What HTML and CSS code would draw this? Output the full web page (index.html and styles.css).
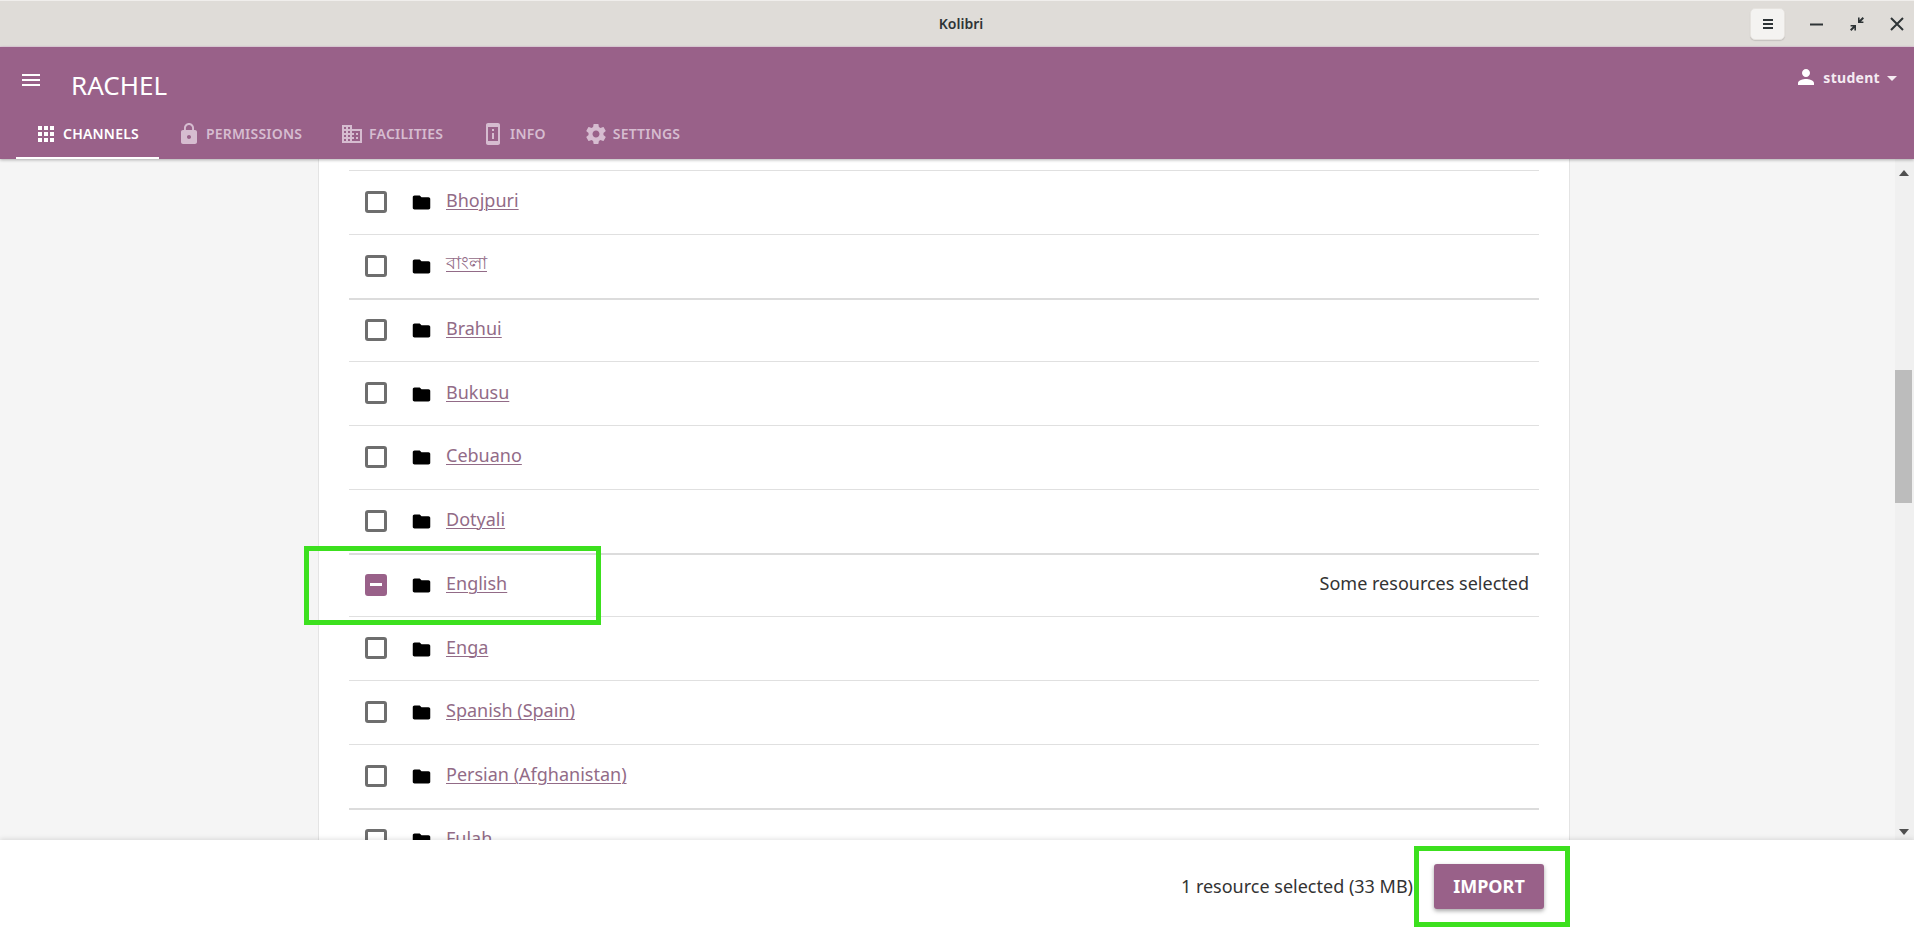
FILE: index.html
```html
<!DOCTYPE html>
<html lang="en">
<head>
  <meta charset="UTF-8">
  <title>Kolibri</title>
  <link rel="stylesheet" href="styles.css">
</head>
<body>

<div class="titlebar">
  <div class="win-title">Kolibri</div>
  <div class="win-controls">
    <button class="win-menu">
      <svg width="16" height="16" viewBox="0 0 16 16"><path d="M3 3h10v2H3zM3 7h10v2H3zM3 11h10v2H3z" fill="#2e3436"/></svg>
    </button>
    <svg class="win-icon min" width="16" height="16" viewBox="0 0 16 16"><path d="M2 7.5h13v2H2z" fill="#2e3436"/></svg>
    <svg class="win-icon restore" width="18" height="18" viewBox="0 0 18 18"><path d="M16 3.4L14.6 2 11.6 5V2.6H10V8h5.4V6.400H13zM2 14.600L3.400 16l3-3v2.400H8V10H2.600v1.600H5z" fill="#2e3436"/></svg>
    <svg class="win-icon close" width="16" height="16" viewBox="0 0 16 16"><path d="M2 2l12 12M14 2L2 14" stroke="#2e3436" stroke-width="2" fill="none"/></svg>
  </div>
</div>

<header class="appbar">
  <div class="appbar-top">
    <svg class="menu-icon" width="18" height="12" viewBox="0 0 18 12"><path d="M0 0h18v2H0zM0 5h18v2H0zM0 10h18v2H0z" fill="#fff"/></svg>
    <div class="app-title">RACHEL</div>
    <div class="user">
      <svg width="24" height="24" viewBox="0 0 24 24"><path d="M12 12c2.210 0 4-1.790 4-4s-1.790-4-4-4-4 1.790-4 4 1.790 4 4 4zm0 2c-2.670 0-8 1.340-8 4v2h16v-2c0-2.660-5.330-4-8-4z" fill="#fff"/></svg>
      <span>student</span>
      <i class="caret"></i>
    </div>
  </div>
  <nav class="tabs">
    <a class="tab active">
      <svg width="24" height="24" viewBox="0 0 24 24"><path d="M4 8h4V4H4v4zm6 12h4v-4h-4v4zm-6 0h4v-4H4v4zm0-6h4v-4H4v4zm6 0h4v-4h-4v4zm6-10v4h4V4h-4zm-6 4h4V4h-4v4zm6 6h4v-4h-4v4zm0 6h4v-4h-4v4z"/></svg>
      CHANNELS
    </a>
    <a class="tab">
      <svg width="24" height="24" viewBox="0 0 24 24"><path d="M18 8h-1V6c0-2.760-2.240-5-5-5S7 3.240 7 6v2H6c-1.100 0-2 .9-2 2v10c0 1.100.9 2 2 2h12c1.100 0 2-.9 2-2V10c0-1.100-.9-2-2-2zm-6 9c-1.100 0-2-.9-2-2s.9-2 2-2 2 .9 2 2-.9 2-2 2zm3.100-9H8.900V6c0-1.710 1.390-3.100 3.100-3.100 1.710 0 3.100 1.390 3.100 3.100v2z"/></svg>
      PERMISSIONS
    </a>
    <a class="tab">
      <svg width="24" height="24" viewBox="0 0 24 24"><path d="M12 7V3H2v18h20V7H12zM6 19H4v-2h2v2zm0-4H4v-2h2v2zm0-4H4V9h2v2zm0-4H4V5h2v2zm4 12H8v-2h2v2zm0-4H8v-2h2v2zm0-4H8V9h2v2zm0-4H8V5h2v2zm10 12h-8v-2h2v-2h-2v-2h2v-2h-2V9h8v10zm-2-8h-2v2h2v-2zm0 4h-2v2h2v-2z"/></svg>
      FACILITIES
    </a>
    <a class="tab">
      <svg width="24" height="24" viewBox="0 0 24 24"><path d="M13 7h-2v2h2V7zm0 4h-2v6h2v-6zm4-9.990L7 1c-1.100 0-2 .9-2 2v18c0 1.100.9 2 2 2h10c1.100 0 2-.9 2-2V3c0-1.100-.9-1.990-2-1.990zM17 19H7V5h10v14z"/></svg>
      INFO
    </a>
    <a class="tab">
      <svg width="24" height="24" viewBox="0 0 24 24"><path d="M19.430 12.980c.04-.32.07-.64.07-.98s-.03-.66-.07-.98l2.110-1.650c.19-.15.24-.42.12-.64l-2-3.460c-.12-.22-.39-.3-.61-.22l-2.490 1c-.52-.4-1.080-.73-1.690-.98l-.38-2.650C14.460 2.180 14.250 2 14 2h-4c-.25 0-.46.18-.49.42l-.38 2.650c-.61.25-1.170.59-1.690.98l-2.490-1c-.23-.09-.49 0-.61.22l-2 3.460c-.13.22-.07.49.12.64l2.110 1.650c-.04.32-.07.65-.07.98s.03.66.07.98l-2.110 1.650c-.19.15-.24.42-.12.64l2 3.460c.12.22.39.3.61.22l2.490-1c.52.4 1.080.73 1.690.98l.38 2.650c.03.24.24.42.49.42h4c.25 0 .46-.18.49-.42l.38-2.650c.61-.25 1.170-.59 1.690-.98l2.490 1c.23.09.49 0 .61-.22l2-3.460c.12-.22.07-.49-.12-.64l-2.110-1.650zM12 15.500c-1.930 0-3.500-1.570-3.500-3.500s1.570-3.500 3.500-3.500 3.500 1.570 3.500 3.500-1.570 3.500-3.500 3.500z"/></svg>
      SETTINGS
    </a>
  </nav>
</header>

<div class="middle">
  <main class="content">
    <div class="card">
      <div class="row">
        <span class="check"></span>
        <svg class="folder" width="21" height="21" viewBox="0 0 24 24"><path d="M10 4H4c-1.100 0-1.990.9-1.990 2L2 18c0 1.100.9 2 2 2h16c1.100 0 2-.9 2-2V8c0-1.100-.9-2-2-2h-8l-2-2z"/></svg>
        <a class="topic">Bhojpuri</a>
      </div>
      <div class="row">
        <span class="check"></span>
        <svg class="folder" width="21" height="21" viewBox="0 0 24 24"><path d="M10 4H4c-1.100 0-1.990.9-1.990 2L2 18c0 1.100.9 2 2 2h16c1.100 0 2-.9 2-2V8c0-1.100-.9-2-2-2h-8l-2-2z"/></svg>
        <a class="topic">বাংলা</a>
      </div>
      <div class="row thick">
        <span class="check"></span>
        <svg class="folder" width="21" height="21" viewBox="0 0 24 24"><path d="M10 4H4c-1.100 0-1.990.9-1.990 2L2 18c0 1.100.9 2 2 2h16c1.100 0 2-.9 2-2V8c0-1.100-.9-2-2-2h-8l-2-2z"/></svg>
        <a class="topic">Brahui</a>
      </div>
      <div class="row">
        <span class="check"></span>
        <svg class="folder" width="21" height="21" viewBox="0 0 24 24"><path d="M10 4H4c-1.100 0-1.990.9-1.990 2L2 18c0 1.100.9 2 2 2h16c1.100 0 2-.9 2-2V8c0-1.100-.9-2-2-2h-8l-2-2z"/></svg>
        <a class="topic">Bukusu</a>
      </div>
      <div class="row">
        <span class="check"></span>
        <svg class="folder" width="21" height="21" viewBox="0 0 24 24"><path d="M10 4H4c-1.100 0-1.990.9-1.990 2L2 18c0 1.100.9 2 2 2h16c1.100 0 2-.9 2-2V8c0-1.100-.9-2-2-2h-8l-2-2z"/></svg>
        <a class="topic">Cebuano</a>
      </div>
      <div class="row">
        <span class="check"></span>
        <svg class="folder" width="21" height="21" viewBox="0 0 24 24"><path d="M10 4H4c-1.100 0-1.990.9-1.990 2L2 18c0 1.100.9 2 2 2h16c1.100 0 2-.9 2-2V8c0-1.100-.9-2-2-2h-8l-2-2z"/></svg>
        <a class="topic">Dotyali</a>
      </div>
      <div class="row thick">
        <span class="check partial"></span>
        <svg class="folder" width="21" height="21" viewBox="0 0 24 24"><path d="M10 4H4c-1.100 0-1.990.9-1.990 2L2 18c0 1.100.9 2 2 2h16c1.100 0 2-.9 2-2V8c0-1.100-.9-2-2-2h-8l-2-2z"/></svg>
        <a class="topic">English</a>
        <span class="row-note">Some resources selected</span>
      </div>
      <div class="row">
        <span class="check"></span>
        <svg class="folder" width="21" height="21" viewBox="0 0 24 24"><path d="M10 4H4c-1.100 0-1.990.9-1.990 2L2 18c0 1.100.9 2 2 2h16c1.100 0 2-.9 2-2V8c0-1.100-.9-2-2-2h-8l-2-2z"/></svg>
        <a class="topic">Enga</a>
      </div>
      <div class="row">
        <span class="check"></span>
        <svg class="folder" width="21" height="21" viewBox="0 0 24 24"><path d="M10 4H4c-1.100 0-1.990.9-1.990 2L2 18c0 1.100.9 2 2 2h16c1.100 0 2-.9 2-2V8c0-1.100-.9-2-2-2h-8l-2-2z"/></svg>
        <a class="topic">Spanish (Spain)</a>
      </div>
      <div class="row">
        <span class="check"></span>
        <svg class="folder" width="21" height="21" viewBox="0 0 24 24"><path d="M10 4H4c-1.100 0-1.990.9-1.990 2L2 18c0 1.100.9 2 2 2h16c1.100 0 2-.9 2-2V8c0-1.100-.9-2-2-2h-8l-2-2z"/></svg>
        <a class="topic">Persian (Afghanistan)</a>
      </div>
      <div class="row thick">
        <span class="check"></span>
        <svg class="folder" width="21" height="21" viewBox="0 0 24 24"><path d="M10 4H4c-1.100 0-1.990.9-1.990 2L2 18c0 1.100.9 2 2 2h16c1.100 0 2-.9 2-2V8c0-1.100-.9-2-2-2h-8l-2-2z"/></svg>
        <a class="topic">Fulah</a>
      </div>
    </div>
  </main>
  <div class="scrollbar">
    <i class="arrow up"></i>
    <div class="thumb"></div>
    <i class="arrow down"></i>
  </div>
</div>

<footer class="bottom-bar">
  <span class="selected">1 resource selected (33 MB)</span>
  <button class="btn-import">IMPORT</button>
</footer>

<!-- green marks drawn over the screenshot -->
<div class="mark mark-row"></div>
<div class="mark mark-btn"></div>

</body>
</html>
```

FILE: styles.css
```css
html, body {
  margin: 0;
  height: 100%;
  overflow: hidden;
}
body {
  position: relative;
  display: flex;
  flex-direction: column;
  font-family: "Noto Sans", "Noto Sans CJK SC", sans-serif;
  background: #f5f5f5;
  color: #333;
}

/* window title bar */
.titlebar {
  position: relative;
  flex: none;
  height: 47px;
  box-sizing: border-box;
  background: #dfdcd8;
  border-top: 1px solid #f0eeec;
  border-bottom: 1px solid #e2d0dc;
  display: flex;
  align-items: center;
  justify-content: flex-end;
}
.win-title {
  position: absolute;
  left: 0;
  right: 0;
  text-align: center;
  padding-left: 8px;
  font-size: 14px;
  font-weight: 600;
  color: #2e3436;
}
.win-controls {
  display: flex;
  align-items: center;
  padding-right: 9px;
}
.win-menu {
  width: 35px;
  height: 32px;
  padding: 0;
  display: flex;
  align-items: center;
  justify-content: center;
  background: #f4f3f1;
  border: 1px solid #e6e3df;
  border-radius: 5px;
  box-shadow: 0 1px 1px rgba(0,0,0,0.12);
}
.win-icon.min { margin-left: 23px; }
.win-icon.restore { margin-left: 24px; }
.win-icon.close { margin-left: 23px; }

/* purple app bar */
.appbar {
  flex: none;
  height: 112px;
  background: #996189;
  color: #fff;
  display: flex;
  flex-direction: column;
  position: relative;
  z-index: 2;
  box-shadow: 0 1px 3px rgba(0,0,0,0.3);
}
.appbar-top {
  flex: 1;
  display: flex;
  align-items: flex-start;
  padding: 0 17px 0 22px;
}
.menu-icon { margin-top: 27px; }
.app-title {
  margin-left: 31px;
  margin-top: 19px;
  font-size: 26px;
  line-height: 38px;
}
.user {
  margin-left: auto;
  margin-top: 18px;
  display: flex;
  align-items: center;
  font-size: 14px;
  font-weight: 700;
  letter-spacing: 0.3px;
  color: #f5ebf2;
}
.user span { margin-left: 5px; }
.caret {
  margin-left: 7px;
  margin-top: 2px;
  border-left: 5px solid transparent;
  border-right: 5px solid transparent;
  border-top: 5px solid #f5ebf2;
}
.tabs {
  display: flex;
  height: 47px;
  padding-left: 16px;
}
.tab {
  display: flex;
  align-items: center;
  gap: 5px;
  box-sizing: border-box;
  padding: 0 20px 2px 18px;
  font-size: 14px;
  font-weight: 600;
  letter-spacing: 0.2px;
  color: #d6bcd0;
  border-bottom: 2px solid transparent;
}
.tab svg { fill: #d6bcd0; }
.tab.active {
  color: #fff;
  border-bottom-color: #fff;
}
.tab.active svg { fill: #fff; }

/* list */
.middle {
  flex: 1;
  min-height: 0;
  display: flex;
}
.content {
  flex: 1;
  overflow: hidden;
  padding-left: 318px;
}
.card {
  width: 1252px;
  height: 100%;
  box-sizing: border-box;
  padding: 11px 30px 0;
  background: #fff;
  border-left: 1px solid #e4e4e4;
  border-right: 1px solid #e4e4e4;
}
.row {
  height: 63.75px;
  box-sizing: border-box;
  border-top: 1px solid #e0e0e0;
  display: flex;
  align-items: center;
  padding: 0 10px 0 16px;
  font-size: 18px;
}
.row.thick { border-top: 2px solid #dcdcdc; }
.check {
  width: 22px;
  height: 22px;
  flex: none;
  box-sizing: border-box;
  border: 3px solid #6e6e6e;
  border-radius: 3px;
  margin-bottom: 1px;
}
.check.partial {
  position: relative;
  background: #996189;
  border-color: #996189;
}
.check.partial::after {
  content: "";
  position: absolute;
  left: 2px;
  right: 2px;
  top: 6px;
  height: 3px;
  background: #fff;
}
.folder {
  margin-left: 24px;
  margin-top: 1px;
  flex: none;
}
.topic {
  margin-left: 14px;
  margin-bottom: 4px;
  color: #926b87;
  text-decoration: underline;
  text-underline-offset: 2px;
  text-decoration-thickness: 1px;
}
.row-note {
  margin-left: auto;
  margin-bottom: 4px;
}

/* fake scrollbar */
.scrollbar {
  position: relative;
  width: 19px;
  flex: none;
  background: #f0f0f0;
}
.thumb {
  margin: 211px 2px 0 0;
  height: 133px;
  background: #bcbcbc;
}
.arrow {
  position: absolute;
  left: 4px;
  border-left: 5px solid transparent;
  border-right: 5px solid transparent;
}
.arrow.up {
  top: 11px;
  border-bottom: 6px solid #505050;
}
.arrow.down {
  bottom: 5px;
  border-top: 6px solid #505050;
}

/* footer */
.bottom-bar {
  flex: none;
  height: 92px;
  position: relative;
  z-index: 2;
  background: #fff;
  box-shadow: 0 -1px 5px rgba(0,0,0,0.12);
  display: flex;
  align-items: center;
  justify-content: flex-end;
  gap: 21px;
  padding-right: 370px;
  font-size: 18px;
}
.btn-import {
  width: 110px;
  height: 45px;
  padding: 0;
  border: none;
  border-radius: 3px;
  background: #996189;
  color: #fff;
  font-family: inherit;
  font-size: 18px;
  font-weight: 700;
  box-shadow: 0 2px 4px rgba(0,0,0,0.35);
}

/* annotation boxes */
.mark {
  position: absolute;
  z-index: 5;
  box-sizing: border-box;
  border: 5px solid #3ce01e;
}
.mark-row {
  left: 304px;
  top: 546px;
  width: 297px;
  height: 79px;
}
.mark-btn {
  left: 1414px;
  top: 846px;
  width: 156px;
  height: 81px;
}
```
